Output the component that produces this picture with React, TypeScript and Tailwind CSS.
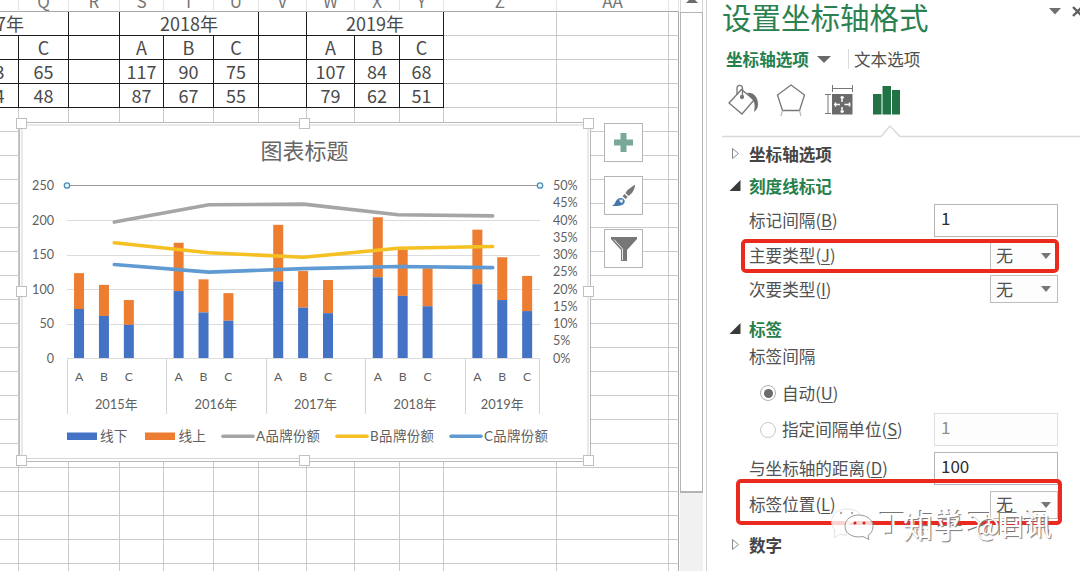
import { ReactNode } from 'react';
import clsx from 'clsx';

interface Cell {
  text?: string;
  span?: number;
  className?: string;
}

const columns = ['', 'Q', 'R', 'S', 'T', 'U', 'V', 'W', 'X', 'Y', 'Z', 'AA', ''];

const dataRows: Cell[][] = [
  [
    { text: '2017年', span: 2, className: '-ml-9' },
    {},
    { text: '2018年', span: 3 },
    {},
    { text: '2019年', span: 3 },
  ],
  [{}, { text: 'C' }, {}, { text: 'A' }, { text: 'B' }, { text: 'C' }, {}, { text: 'A' }, { text: 'B' }, { text: 'C' }],
  [
    { text: '73', className: '-ml-[29px]' }, { text: '65' }, {}, { text: '117' }, { text: '90' }, { text: '75' }, {},
    { text: '107' }, { text: '84' }, { text: '68' },
  ],
  [
    { text: '54', className: '-ml-[29px]' }, { text: '48' }, {}, { text: '87' }, { text: '67' }, { text: '55' }, {},
    { text: '79' }, { text: '62' }, { text: '51' },
  ],
];

const emptyRows = Array.from({ length: 20 }, (_, i) => i);

function Sheet() {
  return (
    <div className="h-[571px] w-[679px] shrink-0 overflow-hidden">
      <div className="grid w-[679px] grid-cols-[19px_50px_51px_44px_50px_45px_48px_48px_45px_44px_113px_112px_10px] auto-rows-[24px]">
        {columns.map((name, i) => (
          <div
            key={i}
            className="-mt-3 flex h-6 items-center justify-center border-b border-r border-b-[#a6a6a6] border-r-[#e4e4e4] pt-px text-[17px] leading-none text-[#777]"
          >
            {name}
          </div>
        ))}
      </div>
      <div className="-mt-3 grid w-[679px] grid-cols-[19px_50px_51px_44px_50px_45px_48px_48px_45px_44px_113px_112px_10px] auto-rows-[24px]">
        {dataRows.map((row, r) => [
          ...row.map((cell, c) => (
            <div
              key={`${r}-${c}`}
              className={clsx(
                'flex items-center justify-center overflow-hidden border-b border-r border-[#1c1c1c] pb-px text-[18px] leading-none text-[#4a4a4a]',
                cell.span === 2 && 'col-span-2',
                cell.span === 3 && 'col-span-3',
              )}
            >
              <span className={clsx('shrink-0', cell.className, cell.span === 2 && '-translate-x-[21px]')}>{cell.text}</span>
            </div>
          )),
          <div key={`${r}-z`} className="border-b border-r border-[#cacaca]" />,
          <div key={`${r}-aa`} className="border-b border-r border-[#cacaca]" />,
          <div key={`${r}-end`} className="border-b border-r border-[#cacaca] border-r-[#a8a8a8]" />,
        ])}
        {emptyRows.map(r =>
          columns.map((_, c) => (
            <div
              key={`${r}-${c}`}
              className={clsx('border-b border-r border-[#cacaca]', c === columns.length - 1 && 'border-r-[#a8a8a8]')}
            />
          )),
        )}
      </div>
    </div>
  );
}

function ScrollBar() {
  return (
    <div className="ml-[1px] flex h-[571px] w-[27px] shrink-0 flex-col border-r border-[#d0d0d0] pr-[3px]">
      <div className="flex h-3 justify-center border-x border-[#d4d4d4]">
        <div className="-mt-[3px] h-0 w-0 border-x-[6px] border-b-[6px] border-x-transparent border-b-[#6b6b6b]" />
      </div>
      <div className="h-[481px] border border-b-2 border-[#b4b4b4] bg-white" />
      <div className="flex-1 bg-[#f1f1f1]" />
    </div>
  );
}

// chart geometry
const LEFT = 67;
const RIGHT = 540;
const BASE = 358;
const TOP = 185.5;
const SLOT = (RIGHT - LEFT) / 19;

const years = [
  { label: '2015年', bars: [[71, 123], [61, 106], [48, 84]] },
  { label: '2016年', bars: [[97, 167], [66, 114], [54, 94]] },
  { label: '2017年', bars: [[111, 193], [73, 126], [65, 113]] },
  { label: '2018年', bars: [[117, 204], [90, 157], [75, 130]] },
  { label: '2019年', bars: [[107, 186], [84, 146], [68, 119]] },
];

const shares = [
  { name: 'A品牌份额', color: '#a5a5a5', values: [39.4, 44.4, 44.6, 41.5, 41.2], x: 222 },
  { name: 'B品牌份额', color: '#f5c022', values: [33.4, 30.5, 29.2, 31.8, 32.3], x: 336 },
  { name: 'C品牌份额', color: '#5f9bd2', values: [27.1, 24.9, 25.9, 26.5, 26.2], x: 450 },
];

const yOf = (value: number, max: number) => BASE - ((BASE - TOP) * value) / max;

const handles = [
  [21, 123], [304, 123], [588, 123],
  [21, 291], [588, 291],
  [21, 460], [304, 460], [588, 460],
];

function Chart() {
  return (
    <svg
      className="absolute left-0 top-0 h-[571px] w-[600px]"
      viewBox="0 0 600 571"
      fontFamily="Lato, 'Noto Sans CJK SC', sans-serif"
      fill="#5f5f5f"
    >
      <rect x="19.5" y="122.5" width="571" height="339" fill="#fff" stroke="#b8b8b8" />
      <rect x="22" y="125" width="566" height="333.5" fill="#fff" stroke="#d4d4d4" />

      <text x="304.5" y="159" fontSize="22" textAnchor="middle" fill="#666">图表标题</text>

      {[0, 50, 100, 150, 200, 250].map(v => (
        <g key={v}>
          {v < 250 && (
            <line x1={LEFT} x2={RIGHT} y1={Math.round(yOf(v, 250)) + 0.5} y2={Math.round(yOf(v, 250)) + 0.5} stroke="#dcdcdc" />
          )}
          <text x="54" y={yOf(v, 250) + 4.5} fontSize="12.6" textAnchor="end">{v}</text>
        </g>
      ))}
      {[0, 5, 10, 15, 20, 25, 30, 35, 40, 45, 50].map(v => (
        <text key={v} x="553" y={yOf(v, 50) + 4.5} fontSize="12.6">{v}%</text>
      ))}

      {years.map((year, g) => {
        const start = LEFT + g * 4 * SLOT;
        const end = Math.min(start + 4 * SLOT, RIGHT);
        return (
          <g key={year.label}>
            <line x1={Math.floor(start) + 0.5} x2={Math.floor(start) + 0.5} y1={BASE} y2="414" stroke="#d4d4d4" />
            {year.bars.map(([offline, total], i) => {
              const x = start + (i + 0.5) * SLOT - 0.4;
              return (
                <g key={i}>
                  <rect x={x - 5} y={yOf(total, 250)} width="10" height={yOf(offline, 250) - yOf(total, 250)} fill="#ed7d31" />
                  <rect x={x - 5} y={yOf(offline, 250)} width="10" height={BASE - yOf(offline, 250)} fill="#4472c4" />
                  <text x={x} y="381" fontSize="12.2" textAnchor="middle">{'ABC'[i]}</text>
                </g>
              );
            })}
            <text x={(start + end) / 2 - 0.5} y="409" fontSize="12.9" textAnchor="middle">{year.label}</text>
          </g>
        );
      })}
      <line x1="539.5" x2="539.5" y1={BASE} y2="414" stroke="#d4d4d4" />

      {shares.map(s => (
        <g key={s.name}>
          <polyline
            points={s.values.map((v, i) => `${LEFT + (i + 0.5) * 94.6},${yOf(v, 50)}`).join(' ')}
            fill="none"
            stroke={s.color}
            strokeWidth="3.6"
            strokeLinecap="round"
            strokeLinejoin="round"
          />
          <line x1={s.x + 1} x2={s.x + 31} y1="436.2" y2="436.2" stroke={s.color} strokeWidth="3.6" strokeLinecap="round" />
          <text x={s.x + 34} y="440.5" fontSize="13.4" textLength="64">{s.name}</text>
        </g>
      ))}

      <rect x="67" y="432.5" width="30" height="7.5" fill="#4472c4" />
      <text x="100" y="440.5" fontSize="13.7">线下</text>
      <rect x="145" y="432.5" width="30" height="7.5" fill="#ed7d31" />
      <text x="178.500" y="440.5" fontSize="13.7">线上</text>

      <line x1={LEFT} x2={RIGHT} y1={TOP} y2={TOP} stroke="#9c9c9c" strokeWidth="1.2" />
      <circle cx={LEFT} cy={TOP} r="2.7" fill="#e8f5fa" stroke="#4a8fb5" strokeWidth="1.3" />
      <circle cx={RIGHT} cy={TOP} r="2.7" fill="#e8f5fa" stroke="#4a8fb5" strokeWidth="1.3" />

      {handles.map(([x, y]) => (
        <rect key={`${x}-${y}`} x={x - 4.5} y={y - 4.5} width="10" height="10" fill="#fff" stroke="#c0c0c0" />
      ))}
    </svg>
  );
}

function ChartButtons() {
  return (
    <div className="absolute left-[604px] top-[123px] flex flex-col gap-[14px]">
      <div className="flex h-[39px] w-[39px] items-center justify-center border border-[#b4b4b4] bg-white">
        <svg width="19" height="19" viewBox="0 0 19 19">
          <path d="M6.500 0h6v6.500H19v6h-6.500V19h-6v-6.500H0v-6h6.500z" fill="#79a896" />
        </svg>
      </div>
      <div className="flex h-[39px] w-[39px] items-center justify-center border border-[#b4b4b4] bg-white">
        <svg width="25" height="25" viewBox="0 0 25 25">
          <path d="M24 1.500 16.500 7l-2 3 3 3L21 10c2-3 3-5.500 3-8.500z" fill="#777" />
          <path d="m13.500 11-2 2.200 3.200 2.800 2-2z" fill="#777" />
          <path d="M1 23c2-1 3-3 4-5 1.200-2.600 5-4 7-2.500 2.400 1.500 2.200 4.500 0 6C9 23.300 5 23 1 23z" fill="#4478ad" />
          <path d="M8 16.500c1 .5 2.500.5 3.500-.5.800 1.300.500 3.300-.7 4.200-1.300-.7-2.400-2-2.800-3.700z" fill="#dcecf8" />
        </svg>
      </div>
      <div className="flex h-[39px] w-[39px] items-center justify-center border border-[#b4b4b4] bg-white">
        <svg width="26" height="26" viewBox="0 0 26 26">
          <path d="M0 1h26v2L16 14v11h-6V14L0 3z" fill="#777" />
          <path d="M3 3.500l8.500 9.500V24" fill="none" stroke="#e8e8e8" strokeWidth="1" />
        </svg>
      </div>
    </div>
  );
}

function Caret() {
  return <span className="mt-[2px] h-0 w-0 border-x-[5px] border-t-[6px] border-x-transparent border-t-[#767676]" />;
}

function SectionTitle({ open, className, children }: { open?: boolean; className?: string; children: ReactNode }) {
  return (
    <div className={clsx('flex h-8 shrink-0 items-center', className)}>
      <svg className="mr-[8px] ml-[22px]" width="12" height="12" viewBox="0 0 12 12">
        {open ? <path d="M11.500 0v11H.5z" fill="#3a3a3a" /> : <path d="M3.500.5v10l6-5z" fill="none" stroke="#8a8a8a" />}
      </svg>
      <span className={clsx('text-[16.6px] font-bold', open ? 'text-[#26804c]' : 'text-[#444]')}>{children}</span>
    </div>
  );
}

function Label({ text, hotkey }: { text: string; hotkey?: string }) {
  return (
    <span className="text-[16.6px] text-[#525252]">
      {text}
      {hotkey && (
        <span>
          (<span className="underline decoration-1 underline-offset-2">{hotkey}</span>)
        </span>
      )}
    </span>
  );
}

function Input({ value, disabled }: { value: string; disabled?: boolean }) {
  return (
    <div
      className={clsx(
        'ml-auto flex h-[33px] w-[124px] border pl-[6px] text-[17px] leading-[26px]',
        disabled ? 'border-[#dedede] bg-[#fdfdfd] text-[#8f8f8f]' : 'border-[#b4b4b4] bg-white text-[#2c2c2c]',
      )}
    >
      {value}
    </div>
  );
}

function Select({ value }: { value: string }) {
  return (
    <div className="ml-auto flex h-[28px] w-[68px] items-center justify-between border border-[#bdbdbd] bg-[#fdfdfd] pb-[2px] pl-[5px] pr-[6px] text-[17px] leading-none text-[#525252]">
      {value}
      <Caret />
    </div>
  );
}

function FormatPane() {
  return (
    <div className="flex h-[571px] w-[373px] shrink-0 flex-col overflow-hidden">
      <div className="flex h-[37px] shrink-0 pl-[15px]">
        <span className="whitespace-nowrap text-[29.500px] leading-[33px] text-[#2b8150]">设置坐标轴格式</span>
        <span className="ml-auto mt-[6px]">
          <svg width="31" height="12" viewBox="0 0 31 12">
            <path d="M0 2h12L6 8.500z" fill="#707070" />
            <path d="m24 1 9.500 9.500M33.500.5 24 10" stroke="#606060" strokeWidth="2.400" />
          </svg>
        </span>
      </div>

      <div className="flex h-11 shrink-0 items-center pl-[19px]">
        <span className="text-[16.600px] font-bold text-[#26804c]">坐标轴选项</span>
        <span className="ml-[8px] h-0 w-0 border-x-[7px] border-t-[7px] border-x-transparent border-t-[#6a6a6a]" />
        <span className="ml-[17px] mr-[5px] h-5 w-px bg-[#dcdcdc]" />
        <span className="text-[16.600px] text-[#505050]">文本选项</span>
      </div>

      <div className="flex h-[43px] shrink-0 items-start pl-[21px] pt-[3px]">
        {/* fill bucket */}
        <svg width="32" height="34" viewBox="0 0 32 34" fill="none" stroke="#777" strokeWidth="1.300">
          <path d="M1 19 13.500 5.500 26 16 14 30z" fill="#fff" />
          <path d="M9 11V4c0-3.500 5-3.500 5.500 0v8" />
          <circle cx="14" cy="13" r="1.500" fill="#707070" />
          <path d="M19 9c6-1 11 4 11 11 0 3-1 6-4 8 1-5 1-9-1-12z" fill="#707070" stroke="none" />
        </svg>
        {/* effects pentagon */}
        <svg className="ml-[16px]" width="30" height="34" viewBox="0 0 30 34" fill="none" stroke="#777" strokeWidth="1.300">
          <path d="M15 1 28.500 11 23.500 26.500h-17L1.500 11z" />
          <path d="M6.500 26.500 5 32M23.500 26.500 25 32" stroke="#bdbdbd" />
        </svg>
        {/* size */}
        <svg className="ml-[18px]" width="30" height="34" viewBox="0 0 30 34" fill="none" stroke="#777">
          <path d="M9 4.500h19M8.500 1v7M28.500 1v7M1 10.500h6M1 29.500h6M4 10.500v19" />
          <path d="M8 10h20.500v20.500H8z" fill="#6b6b6b" stroke="none" />
          <path d="M18 12v6M18 23v6M10 20.500h6M20.500 20.500h6M16.500 13.500h3.500M16.500 27.500h3.500M11.500 18.500v4M25.500 18.500v4" stroke="#fff" strokeWidth="1.500" />
        </svg>
        {/* axis options */}
        <svg className="ml-[19px]" width="28" height="34" viewBox="0 0 28 34" fill="#217346">
          <path d="M0 10h8.500v20.500H0zM9.500 2h8.500v28.500H9.500zM19 6h8v24.500h-8z" />
        </svg>
      </div>

      <svg className="ml-[15px] shrink-0" width="358" height="14" viewBox="0 0 358 14" fill="none" stroke="#d8d8d8" strokeWidth="1.300">
        <path d="M0 12.500h159L168 2l10 10.500h180" />
      </svg>

      <SectionTitle>坐标轴选项</SectionTitle>
      <SectionTitle open>刻度线标记</SectionTitle>
      <div className="flex h-[35px] shrink-0 items-center pl-[42px] pr-[22px] pt-px">
        <Label text="标记间隔" hotkey="B" />
        <Input value="1" />
      </div>
      <div className="relative flex h-9 shrink-0 items-center pl-[42px] pr-[22px] pt-px">
        <Label text="主要类型" hotkey="J" />
        <Select value="无" />
        <div className="absolute left-[34px] top-[2px] h-[34px] w-[318px] rounded-[5px] border-[4.500px] border-[#ea2a1e]" />
      </div>
      <div className="flex h-8 shrink-0 items-center pl-[42px] pr-[22px]">
        <Label text="次要类型" hotkey="I" />
        <Select value="无" />
      </div>

      <SectionTitle open className="mt-2">标签</SectionTitle>
      <div className="flex h-[23px] shrink-0 items-center pl-[42px]">
        <Label text="标签间隔" />
      </div>
      <div className="mt-[7px] flex h-9 shrink-0 items-center pl-[53px]">
        <span className="mr-[6px] flex h-4 w-4 items-center justify-center rounded-full border border-[#b0b0b0]">
          <span className="h-[9px] w-[9px] rounded-full bg-[#6b6b6b]" />
        </span>
        <Label text="自动" hotkey="U" />
      </div>
      <div className="flex h-[37px] shrink-0 items-center pl-[53px] pr-[22px]">
        <span className="mr-[6px] h-4 w-4 rounded-full border border-[#c8c8c8]" />
        <Label text="指定间隔单位" hotkey="S" />
        <Input value="1" disabled />
      </div>
      <div className="flex h-10 shrink-0 items-center pl-[42px] pr-[22px]">
        <Label text="与坐标轴的距离" hotkey="D" />
        <Input value="100" />
      </div>
      <div className="relative flex h-[33px] shrink-0 items-center pl-[42px] pr-[22px]">
        <Label text="标签位置" hotkey="L" />
        <Select value="无" />
        <div className="absolute -top-[9px] left-[29px] h-[46px] w-[326px] rounded-[5px] border-[4.500px] border-[#ea2a1e]" />
      </div>
      <SectionTitle className="mt-2">数字</SectionTitle>
    </div>
  );
}

// white watermark with a grey drop edge
function Watermark() {
  return (
    <div className="absolute left-[830px] top-[506px] h-[45px] w-[240px] whitespace-nowrap">
      <svg className="absolute left-0 top-0" width="46" height="40" viewBox="0 0 46 40">
        <path d="M5 24c-8-9-1-21 12-21 9 0 15 5 16 11-12-1-20 8-16 15-3 0-5 0-7-1l-6 4z" fill="#fff" fillOpacity="0.8" stroke="#dcdcdc" strokeWidth="0.8" />
        <path d="M29 9c8 0 14 5 14 11.500 0 4-2 7-5 9l1 4-6-3c-10 2-18-3-18-10S21 9 29 9z" fill="#fff" fillOpacity="0.8" stroke="#999" strokeWidth="1" />
        <circle cx="11" cy="7" r="1.200" fill="#aaa" />
        <circle cx="22" cy="7" r="1.200" fill="#aaa" />
        <circle cx="25" cy="17" r="1.500" fill="#c22" />
        <circle cx="34" cy="17" r="1.500" fill="#c22" />
      </svg>
      <span className="absolute left-[49px] top-[3px] text-[27px] leading-none tracking-[2px] text-white [text-shadow:-1px_-1px_0_#777]">
        丁点学习日讯
      </span>
      <span className="absolute left-[73px] top-[4px] flex items-center gap-[12px] text-[30px] leading-none text-white [text-shadow:1px_1px_1px_#777]">
        <span>知乎</span>
        <span className="text-[26px]">@日讯</span>
      </span>
    </div>
  );
}

export default function App() {
  return (
    <div className="relative flex h-[571px] w-[1080px] overflow-hidden bg-white font-['Noto_Sans_CJK_SC',sans-serif]">
      <Sheet />
      <ScrollBar />
      <FormatPane />
      <Chart />
      <ChartButtons />
      <Watermark />
    </div>
  );
}
